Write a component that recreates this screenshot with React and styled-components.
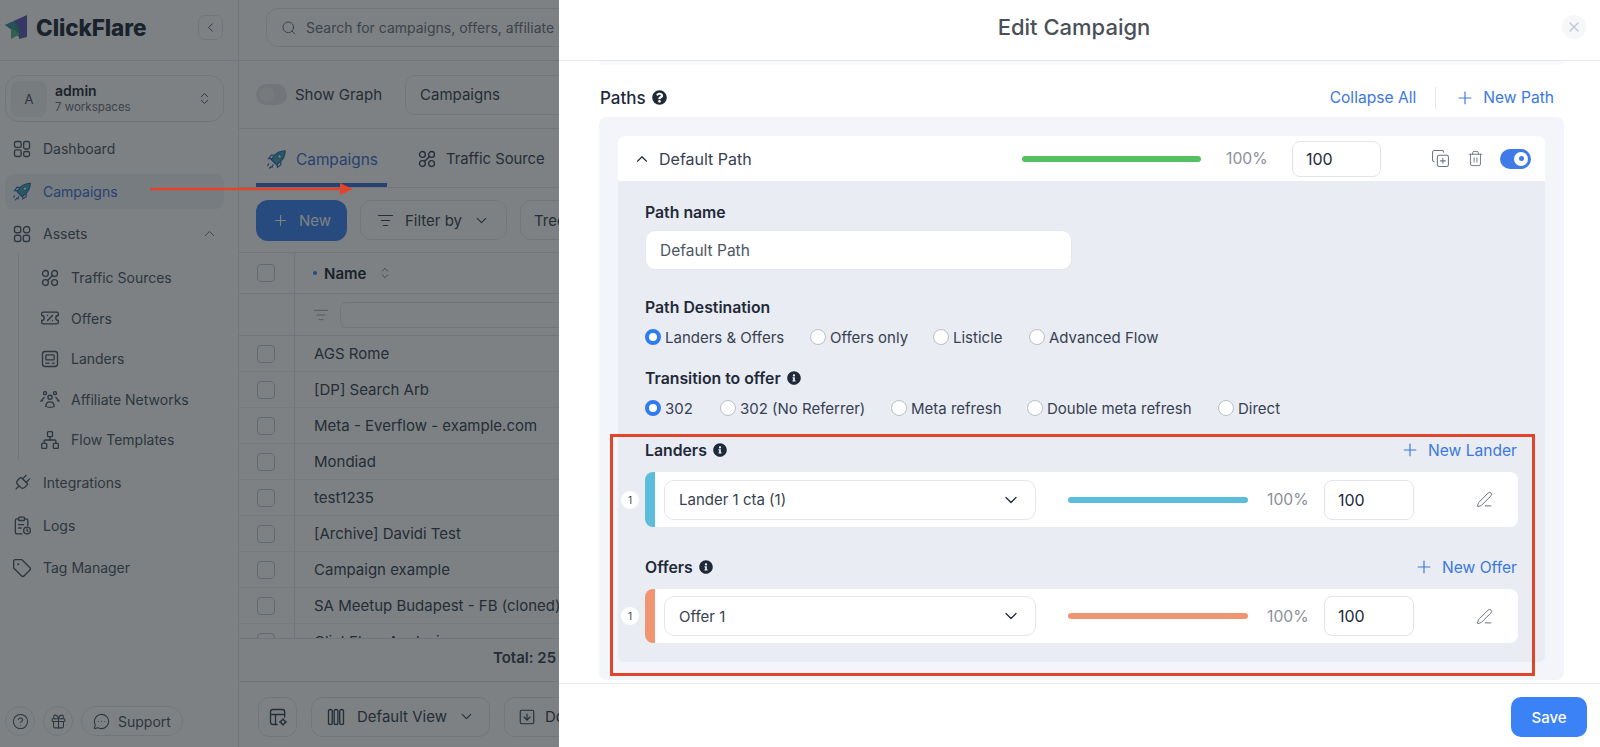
import React from 'react'
import styled, { createGlobalStyle } from 'styled-components'
import {
  ChevronDown, ChevronLeft, ChevronUp, ChevronsUpDown, CircleHelp, CopyPlus, Gift,
  ListFilter, MessageCircleMore, Network, PenLine, Plug, Plus, Search, SquareArrowDown,
  Tag, TicketPercent, Trash2, X
} from 'lucide-react'
import { FaInfoCircle, FaQuestionCircle } from 'react-icons/fa'

const GlobalStyle = createGlobalStyle`
  html, body { margin: 0; height: 100%; }
  body { font-family: Inter, "Liberation Sans", sans-serif; color: #1f2937; overflow: hidden; background: #fff; }
  * { box-sizing: border-box; }
`

const Shell = styled.div`
  position: relative;
  display: flex;
  width: 1600px;
  height: 747px;
  overflow: hidden;
`

/* sidebar */
const Sidebar = styled.aside`
  width: 239px;
  flex: none;
  display: flex;
  flex-direction: column;
  border-right: 1px solid #e5e7eb;
  padding-bottom: 11px;
`

const LogoBar = styled.div`
  height: 61px;
  flex: none;
  display: flex;
  align-items: center;
  padding: 0 15px 6px 5px;
  border-bottom: 1px solid #e5e7eb;
`

const LogoText = styled.span`
  margin-left: 8px;
  font-size: 22.5px;
  font-weight: 800;
  color: #1e293b;
  letter-spacing: -0.1px;
`

const CollapseButton = styled.span`
  margin-left: auto;
  width: 25px;
  height: 25px;
  border: 1px solid #e5e7eb;
  border-radius: 7px;
  display: flex;
  align-items: center;
  justify-content: center;
  color: #4b5563;
`

const Account = styled.div`
  margin: 14px 14px 0 5px;
  height: 47px;
  border: 1px solid #e5e7eb;
  border-radius: 14px;
  display: flex;
  align-items: center;
  padding: 0 11px 0 5px;
  color: #4b5563;
`

const Avatar = styled.span`
  width: 36px;
  height: 36px;
  border-radius: 8px;
  background: #f1f3f5;
  display: flex;
  align-items: center;
  justify-content: center;
  font-size: 13px;
  margin-right: 8px;
`

const AccountName = styled.div`
  font-size: 14px;
  font-weight: 600;
  color: #1f2937;
  line-height: 17px;
`

const AccountSub = styled.div`
  font-size: 11.5px;
  color: #6b7280;
  line-height: 17px;
`

const AccountText = styled.div`
  flex: 1;
`

const Nav = styled.nav`
  flex: 1;
  display: flex;
  flex-direction: column;
  padding: 9px 14px 0 5px;
`

const NavItem = styled.a`
  display: flex;
  align-items: center;
  height: ${p => p.$sub ? '40.5px' : '35px'};
  margin-bottom: ${p => p.$sub ? 0 : '7.5px'};
  padding-left: ${p => p.$sub ? '35px' : '7px'};
  gap: 11px;
  border-radius: 8px;
  font-size: 14px;
  color: ${p => p.$active ? '#3b6fd4' : '#4b5563'};
  background: ${p => p.$active ? '#f0f3f8' : 'transparent'};
`

const NavIcon = styled.span`
  width: 20px;
  flex: none;
  display: flex;
  align-items: center;
  justify-content: center;
`

const NavEnd = styled.span`
  margin-left: auto;
  margin-right: 6px;
  display: flex;
  color: #6b7280;
`

const SubNav = styled.div`
  margin: -1px 0 5px;
  display: flex;
  flex-direction: column;
  position: relative;
  &::before {
    content: '';
    position: absolute;
    left: 13px;
    top: -4px;
    bottom: 0;
    width: 1px;
    background: #e5e7eb;
  }
`

const SideFooter = styled.div`
  display: flex;
  gap: 8px;
  padding-left: 5px;
  margin-top: -1px;
`

const RoundButton = styled.span`
  height: 30px;
  min-width: 30px;
  border: 1px solid #e5e7eb;
  border-radius: 15px;
  display: flex;
  align-items: center;
  justify-content: center;
  gap: 8px;
  padding: ${p => p.$wide ? '0 11px' : 0};
  font-size: 14px;
  color: #4b5563;
`

/* page behind the drawer */
const Main = styled.main`
  flex: 1;
  min-width: 0;
  display: flex;
  flex-direction: column;
`

const TopBar = styled.div`
  height: 61px;
  flex: none;
  padding: 8px 18px 8px 27px;
  border-bottom: 1px solid #e5e7eb;
`

const SearchBox = styled.div`
  height: 39px;
  border: 1px solid #e5e7eb;
  border-radius: 12px;
  display: flex;
  align-items: center;
  gap: 9px;
  padding-left: 14px;
  font-size: 14px;
  color: #6b7280;
  white-space: nowrap;
`

const GraphBar = styled.div`
  height: 68px;
  flex: none;
  display: flex;
  align-items: center;
  padding: 0 17px;
  border-bottom: 1px solid #e5e7eb;
  font-size: 15px;
  color: #374151;
`

const FakeToggle = styled.span`
  width: 31px;
  height: 21px;
  border-radius: 11px;
  background: #e5e7eb;
  margin-right: 8px;
  display: flex;
  align-items: center;
  padding-left: 3px;
  &::after {
    content: '';
    width: 15px;
    height: 15px;
    border-radius: 50%;
    background: #eef0f2;
  }
`

const ViewSelect = styled.div`
  margin-left: 23px;
  width: 400px;
  height: 40px;
  border: 1px solid #e5e7eb;
  border-radius: 10px;
  display: flex;
  align-items: center;
  padding-left: 14px;
`

const Tabs = styled.div`
  height: 59px;
  flex: none;
  display: flex;
  align-items: center;
  padding: 0 18px 0 17px;
  border-bottom: 1px solid #e5e7eb;
`

const TabItem = styled.span`
  width: ${p => p.$width}px;
  height: 100%;
  display: flex;
  align-items: center;
  padding-left: 10px;
  padding-top: ${p => p.$active ? '6px' : '2px'};
  gap: 9px;
  font-size: ${p => p.$active ? '15.4px' : '14.8px'};
  color: ${p => p.$active ? '#3b6fd4' : '#374151'};
  border-bottom: ${p => p.$active ? '4px solid #3b6fd4' : '0'};
`

const Toolbar = styled.div`
  height: 65px;
  flex: none;
  display: flex;
  align-items: center;
  gap: 13px;
  padding: 0 17px;
  border-bottom: 1px solid #e5e7eb;
  white-space: nowrap;
`

const PrimaryButton = styled.span`
  width: 91px;
  height: 41px;
  border-radius: 12px;
  background: #3b82f6;
  color: #fff;
  display: flex;
  align-items: center;
  justify-content: center;
  gap: 10px;
  font-size: 15px;
  flex: none;
`

const GhostButton = styled.span`
  width: ${p => p.$width}px;
  height: 40px;
  flex: none;
  border: 1px solid #e5e7eb;
  border-radius: 11px;
  display: flex;
  align-items: center;
  justify-content: ${p => p.$left ? 'flex-start' : 'center'};
  gap: ${p => p.$left ? '9px' : '11px'};
  padding: ${p => p.$left ? '0 13px' : 0};
  font-size: 15px;
  color: #374151;
`

const TableHead = styled.div`
  height: 41px;
  flex: none;
  display: flex;
  align-items: center;
  border-bottom: 1px solid #e5e7eb;
  font-size: 15px;
  font-weight: 600;
`

const CheckCell = styled.span`
  width: 56px;
  flex: none;
  align-self: stretch;
  display: flex;
  align-items: center;
  padding-left: 18px;
  border-right: 1px solid #e5e7eb;
`

const Checkbox = styled.span`
  width: 18px;
  height: 18px;
  border: 1px solid #c4c9d1;
  border-radius: 4px;
  flex: none;
`

const Dot = styled.span`
  width: 4px;
  height: 4px;
  border-radius: 50%;
  background: #3b82f6;
  margin: 0 7px 0 18px;
`

const SortIcon = styled.span`
  display: flex;
  margin-left: 12px;
  color: #6b7280;
`

const FilterRow = styled.div`
  height: 42px;
  flex: none;
  display: flex;
  align-items: center;
  border-bottom: 1px solid #e5e7eb;
  color: #9ca3af;
`

const FilterInput = styled.span`
  margin-left: 11px;
  flex: 1;
  height: 26px;
  border: 1px solid #e5e7eb;
  border-radius: 6px;
`

const FilterIcon = styled.span`
  margin-left: 18px;
  display: flex;
`

const TableRows = styled.div`
  height: 302px;
  flex: none;
  overflow: hidden;
`

const TableRow = styled.div`
  height: 36px;
  display: flex;
  align-items: center;
  border-bottom: 1px solid #eceef1;
  font-size: 15px;
  color: #374151;
  white-space: nowrap;
`

const RowName = styled.span`
  margin-left: 19px;
`

const TotalRow = styled.div`
  height: 44px;
  flex: none;
  padding: 9px 0 0 254px;
  border-top: 1px solid #e5e7eb;
  border-bottom: 1px solid #e5e7eb;
  font-size: 15px;
  font-weight: 600;
  color: #374151;
  white-space: nowrap;
`

const PageFooter = styled.div`
  flex: 1;
  display: flex;
  align-items: center;
  gap: 14px;
  padding: 4px 19px 0;
`

/* dimmer, drawer and annotations */
const Dimmer = styled.div`
  position: absolute;
  inset: 0;
  background: rgba(24, 30, 33, 0.56);
`

const Drawer = styled.section`
  position: absolute;
  top: 0;
  right: 0;
  bottom: 0;
  width: 1041px;
  background: #fff;
  display: flex;
  flex-direction: column;
`

const DrawerHeader = styled.header`
  position: relative;
  height: 61px;
  flex: none;
  display: flex;
  align-items: center;
  justify-content: center;
  padding: 0 11px 7px 0;
  border-bottom: 1px solid #e5e7eb;
`

const DrawerTitle = styled.h2`
  margin: 0;
  font-size: 22px;
  font-weight: 500;
  color: #4a5058;
`

const CloseButton = styled.span`
  position: absolute;
  right: 14px;
  top: 15px;
  width: 24px;
  height: 24px;
  border-radius: 50%;
  background: #f6f7f9;
  color: #c4c8d6;
  display: flex;
  align-items: center;
  justify-content: center;
`

const DrawerBody = styled.div`
  flex: 1;
  min-height: 0;
  padding: 0 36px 0 40px;
`

const PrevCardEnd = styled.div`
  height: 4px;
  border-radius: 0 0 6px 6px;
  background: #f8f9fc;
`

const PathsHead = styled.div`
  height: 52px;
  display: flex;
  align-items: center;
  padding: 13px 10px 0 1px;
`

const PathsTitle = styled.span`
  font-size: 17px;
  font-weight: 500;
  color: #1f2937;
  display: flex;
  align-items: center;
  gap: 6px;
`

const LinkButton = styled.span`
  display: flex;
  align-items: center;
  gap: 8px;
  font-size: 15.6px;
  color: #3b78e0;
  margin-left: ${p => p.$auto ? 'auto' : 0};
`

const VLine = styled.span`
  width: 1px;
  height: 22px;
  background: #e5e7eb;
  margin: 0 19px;
`

const PathsPanel = styled.div`
  background: #f3f5fb;
  border-radius: 8px;
  padding: 19px 19px 18px 19px;
`

const PathCard = styled.div`
  border-radius: 6px;
  overflow: hidden;
  background: #e9ecf3;
`

const CardHead = styled.div`
  height: 45px;
  background: #fff;
  display: flex;
  align-items: center;
  padding: 0 14px 0 15px;
  font-size: 16px;
  color: #374151;
`

const CardName = styled.span`
  margin: 0 auto 0 8px;
`

const Bar = styled.span`
  width: ${p => p.$width}px;
  height: 6px;
  flex: none;
  border-radius: 3px;
  background: ${p => p.$color};
  margin-right: ${p => p.$gap}px;
`

const Percent = styled.span`
  font-size: 15.7px;
  color: #8a8f98;
  flex: none;
  width: ${p => p.$width}px;
`

const NumberBox = styled.span`
  width: ${p => p.$width}px;
  height: ${p => p.$height}px;
  flex: none;
  border: 1px solid #e1e4ea;
  border-radius: 8px;
  background: #fff;
  display: flex;
  align-items: center;
  padding-left: 13px;
  font-size: 16px;
  color: #1f2937;
`

const IconSlot = styled.span`
  display: flex;
  color: #6b7280;
  margin-left: ${p => p.$left}px;
`

const Toggle = styled.span`
  width: 31px;
  height: 20px;
  flex: none;
  border-radius: 10px;
  background: #3f7ae8;
  margin-left: 16px;
  display: flex;
  align-items: center;
  justify-content: flex-end;
  padding-right: 3px;
`

const ToggleKnob = styled.span`
  width: 14px;
  height: 14px;
  flex: none;
  border-radius: 50%;
  background: #fff;
  display: flex;
  align-items: center;
  justify-content: center;
  &::after {
    content: '';
    width: 5px;
    height: 5px;
    border-radius: 50%;
    background: #3f7ae8;
  }
`

const CardBody = styled.div`
  position: relative;
  padding: 22px 27px 19px 27px;
`

const FieldLabel = styled.div`
  display: flex;
  align-items: center;
  gap: 6px;
  height: 18px;
  font-size: 15.8px;
  font-weight: 600;
  color: #1f2937;
  margin-top: ${p => p.$top || 0}px;
`

const NameInput = styled.div`
  width: 427px;
  height: 40px;
  margin-top: 9px;
  border: 1px solid #e3e6ec;
  border-radius: 10px;
  background: #fff;
  display: flex;
  align-items: center;
  padding-left: 14px;
  font-size: 15.5px;
  color: #4b5563;
`

const RadioRow = styled.div`
  height: 20px;
  margin-top: 11px;
  display: flex;
  align-items: center;
`

const RadioItem = styled.span`
  display: flex;
  align-items: center;
  gap: 4px;
  font-size: 15px;
  color: #374151;
  white-space: nowrap;
  width: ${p => p.$width}px;
  flex: none;
`

const RadioDot = styled.span`
  width: 16px;
  height: 16px;
  flex: none;
  border-radius: 50%;
  background: #fff;
  border: ${p => p.$on ? '4.5px solid #2f7bf0' : '1px solid #b9bec8'};
`

const SectionHead = styled.div`
  display: flex;
  justify-content: space-between;
  align-items: center;
  height: 18px;
  margin-top: ${p => p.$top}px;
  padding-right: 1px;
`

const ItemRow = styled.div`
  position: relative;
  height: ${p => p.$height}px;
  margin-top: ${p => p.$top}px;
  background: #fff;
  border-radius: 8px;
  display: flex;
  align-items: center;
`

const Strip = styled.span`
  width: 10px;
  align-self: stretch;
  flex: none;
  border-radius: 8px 0 0 8px;
  background: ${p => p.$color};
`

const OrderBadge = styled.span`
  position: absolute;
  left: -24px;
  top: 50%;
  margin-top: -9px;
  width: 18px;
  height: 18px;
  border-radius: 50%;
  background: #fff;
  display: flex;
  align-items: center;
  justify-content: center;
  font-size: 10px;
  color: #374151;
`

const ItemSelect = styled.span`
  width: 372px;
  height: 40px;
  flex: none;
  margin: 0 32px 0 9px;
  border: 1px solid #e3e6ec;
  border-radius: 10px;
  display: flex;
  align-items: center;
  justify-content: space-between;
  padding: 0 14px 0 14px;
  font-size: 15px;
  color: #374151;
`

const DrawerFooter = styled.footer`
  height: 64px;
  flex: none;
  display: flex;
  justify-content: flex-end;
  align-items: flex-start;
  padding: 13px 13px 0 0;
  border-top: 1px solid #e5e7eb;
`

const SaveButton = styled.span`
  width: 76px;
  height: 40px;
  border-radius: 10px;
  background: #3b82f6;
  color: #fff;
  display: flex;
  align-items: center;
  justify-content: center;
  font-size: 15px;
  font-weight: 500;
`

const RedBox = styled.div`
  position: absolute;
  left: 610px;
  top: 434px;
  width: 925px;
  height: 242px;
  border: 3px solid #e2442b;
  pointer-events: none;
`

const RedArrow = styled.svg`
  position: absolute;
  left: 150px;
  top: 182px;
`

/* drawn icons */
const Svg = ({ size = 20, children, ...rest }) => (
  <svg width={size} height={size} viewBox="0 0 24 24" fill="none" stroke="currentColor" strokeWidth="1.6" strokeLinecap="round" strokeLinejoin="round" {...rest}>{children}</svg>
)

const LogoMark = () => (
  <svg width="23" height="25" viewBox="0 0 23 25">
    <polygon points="0,10 21,1 14,22 8,16" fill="#3d8d8a" />
    <polygon points="9,6 22,0 22,22 14,24 14,12" fill="#5b57b8" />
    <polygon points="6,13 15,19 6,24" fill="#55b58a" />
    <polygon points="0,10 9,6 9,13" fill="#3c8fb0" />
  </svg>
)

const RocketIcon = ({ size = 21 }) => (
  <svg width={size} height={size} viewBox="0 0 24 24" fill="none">
    <path d="M22 2c-6 .3-10 2.3-13 6l-3 4 6 6 4-3c3.700-3 5.700-7 6-13z" fill="#3fa7b5" stroke="#2f63b8" strokeWidth="1.300" strokeLinejoin="round" />
    <circle cx="15.500" cy="8.500" r="2" fill="#fff" stroke="#2f63b8" />
    <path d="M7 11H3l3-4h3M13 17v4l4-3v-3M3 17l-1 2M6 20l-2 2M8 18l-1 3" stroke="#2f63b8" strokeWidth="1.300" strokeLinecap="round" />
  </svg>
)

const DashIcon = () => (
  <Svg size={20}>
    <rect x="3" y="3" width="8" height="7" rx="2" /><rect x="14" y="3" width="7" height="9" rx="2" />
    <rect x="3" y="13" width="8" height="8" rx="2" /><rect x="14" y="15" width="7" height="6" rx="2" />
  </Svg>
)

const AssetsIcon = () => (
  <Svg size={20}>
    <rect x="3" y="3" width="7.500" height="7.500" rx="2.500" /><circle cx="17.500" cy="6.800" r="3.800" />
    <rect x="3" y="13.500" width="7.500" height="7.500" rx="2.500" /><rect x="13.500" y="13.500" width="7.500" height="7.500" rx="2.500" />
  </Svg>
)

const TrafficIcon = ({ size = 20 }) => (
  <Svg size={size}>
    <circle cx="6.500" cy="6.500" r="3.500" /><circle cx="17.500" cy="6.500" r="3.500" />
    <circle cx="6.500" cy="17.500" r="3.500" /><circle cx="17.500" cy="17.500" r="3.500" />
    <path d="M15 9l-6 6" />
  </Svg>
)

const LanderIcon = () => (
  <Svg size={20}>
    <rect x="3" y="3" width="18" height="18" rx="3" /><rect x="7" y="7" width="10" height="6" rx="1" />
    <path d="M7 17h4M15 17h2" />
  </Svg>
)

const PeopleIcon = () => (
  <Svg size={22}>
    <circle cx="12" cy="10" r="2.500" /><circle cx="6" cy="5" r="1.800" /><circle cx="18" cy="5" r="1.800" />
    <path d="M7 21c0-3.500 2-5.500 5-5.500s5 2 5 5.500c-2.500 1.200-7.500 1.200-10 0zM3 14l-2 .5L5 10M21 14l2 .5L19 10" />
  </Svg>
)

const LogsIcon = () => (
  <Svg size={21}>
    <rect x="8" y="2" width="7" height="4" rx="1" />
    <path d="M8 4H6a2 2 0 0 0-2 2v14a2 2 0 0 0 2 2h6M15 4h2a2 2 0 0 1 2 2v6M8 11h6M8 15h3" />
    <circle cx="18" cy="18" r="4" /><path d="M18 16v2l1 1" />
  </Svg>
)

const ColumnsIcon = () => (
  <Svg size={20}>
    <rect x="3" y="3" width="4.500" height="18" rx="2.200" /><rect x="9.800" y="3" width="4.500" height="18" rx="2.200" /><rect x="16.500" y="3" width="4.500" height="18" rx="2.200" />
  </Svg>
)

const TableGearIcon = () => (
  <Svg size={20}>
    <path d="M11 21H6a3 3 0 0 1-3-3V6a3 3 0 0 1 3-3h11a3 3 0 0 1 3 3v6M3 9h17M9 9v12" />
    <circle cx="18" cy="18" r="2.500" /><path d="M18 14v1M18 21v1M14 18h1M21 18h1" />
  </Svg>
)

const navAssets = [
  ['Traffic Sources', <TrafficIcon key="t" />],
  ['Offers', <TicketPercent key="o" size={20} strokeWidth={1.6} />],
  ['Landers', <LanderIcon key="l" />],
  ['Affiliate Networks', <PeopleIcon key="a" />],
  ['Flow Templates', <Network key="f" size={20} strokeWidth={1.6} />]
]

const campaigns = [
  'AGS Rome', '[DP] Search Arb', 'Meta - Everflow - example.com', 'Mondiad', 'test1235',
  '[Archive] Davidi Test', 'Campaign example', 'SA Meetup Budapest - FB (cloned)', 'ClickFlare Analysis'
]

const destinations = [['Landers & Offers', 165, true], ['Offers only', 123], ['Listicle', 96], ['Advanced Flow', 120]]
const transitions = [['302', 75, true], ['302 (No Referrer)', 171], ['Meta refresh', 136], ['Double meta refresh', 191], ['Direct', 70]]

const InfoLabel = ({ children, top }) => (
  <FieldLabel $top={top}>{children} <FaInfoCircle size={14} color="#1f2937" /></FieldLabel>
)

const Radios = ({ items }) => (
  <RadioRow>
    {items.map(([label, width, on]) => (
      <RadioItem key={label} $width={width}><RadioDot $on={on} />{label}</RadioItem>
    ))}
  </RadioRow>
)

const AddLink = ({ children }) => (
  <LinkButton><Plus size={20} strokeWidth={1.4} />{children}</LinkButton>
)

const ResourceRow = ({ color, name, height, top }) => (
  <ItemRow $height={height} $top={top}>
    <OrderBadge>1</OrderBadge>
    <Strip $color={color} />
    <ItemSelect>{name}<ChevronDown size={20} strokeWidth={1.5} color="#1f2937" /></ItemSelect>
    <Bar $width={180} $gap={19} $color={color} />
    <Percent $width={57}>100%</Percent>
    <NumberBox $width={90} $height={40}>100</NumberBox>
    <IconSlot $left={62}><PenLine size={17} strokeWidth={1.4} /></IconSlot>
  </ItemRow>
)

const App = () => (
  <Shell>
    <GlobalStyle />
    <Sidebar>
      <LogoBar>
        <LogoMark />
        <LogoText>ClickFlare</LogoText>
        <CollapseButton><ChevronLeft size={15} strokeWidth={1.5} /></CollapseButton>
      </LogoBar>
      <Account>
        <Avatar>A</Avatar>
        <AccountText>
          <AccountName>admin</AccountName>
          <AccountSub>7 workspaces</AccountSub>
        </AccountText>
        <ChevronsUpDown size={15} strokeWidth={1.5} />
      </Account>
      <Nav>
        <NavItem><NavIcon><DashIcon /></NavIcon>Dashboard</NavItem>
        <NavItem $active><NavIcon><RocketIcon /></NavIcon>Campaigns</NavItem>
        <NavItem><NavIcon><AssetsIcon /></NavIcon>Assets<NavEnd><ChevronUp size={17} strokeWidth={1.4} /></NavEnd></NavItem>
        <SubNav>
          {navAssets.map(([label, icon]) => (
            <NavItem $sub key={label}><NavIcon>{icon}</NavIcon>{label}</NavItem>
          ))}
        </SubNav>
        <NavItem><NavIcon><Plug size={20} strokeWidth={1.6} style={{ transform: 'rotate(45deg)' }} /></NavIcon>Integrations</NavItem>
        <NavItem><NavIcon><LogsIcon /></NavIcon>Logs</NavItem>
        <NavItem><NavIcon><Tag size={20} strokeWidth={1.6} /></NavIcon>Tag Manager</NavItem>
      </Nav>
      <SideFooter>
        <RoundButton><CircleHelp size={17} strokeWidth={1.5} /></RoundButton>
        <RoundButton><Gift size={17} strokeWidth={1.5} /></RoundButton>
        <RoundButton $wide><MessageCircleMore size={17} strokeWidth={1.5} />Support</RoundButton>
      </SideFooter>
    </Sidebar>

    <Main>
      <TopBar>
        <SearchBox><Search size={16} strokeWidth={1.5} />Search for campaigns, offers, affiliate networks...</SearchBox>
      </TopBar>
      <GraphBar>
        <FakeToggle />Show Graph
        <ViewSelect>Campaigns</ViewSelect>
      </GraphBar>
      <Tabs>
        <TabItem $active $width={131}><RocketIcon />Campaigns</TabItem>
        <TabItem $width={160} style={{ marginLeft: 20 }}><TrafficIcon />Traffic Source</TabItem>
      </Tabs>
      <Toolbar>
        <PrimaryButton><Plus size={17} strokeWidth={1.6} />New</PrimaryButton>
        <GhostButton $width={147}><ListFilter size={17} strokeWidth={1.5} />Filter by<ChevronDown size={17} strokeWidth={1.5} /></GhostButton>
        <GhostButton $width={200} $left>Tree</GhostButton>
      </Toolbar>
      <TableHead>
        <CheckCell><Checkbox /></CheckCell>
        <Dot />Name
        <SortIcon><ChevronsUpDown size={14} strokeWidth={1.5} /></SortIcon>
      </TableHead>
      <FilterRow>
        <CheckCell />
        <FilterIcon><ListFilter size={16} strokeWidth={1.5} /></FilterIcon>
        <FilterInput />
      </FilterRow>
      <TableRows>
        {campaigns.map(name => (
          <TableRow key={name}>
            <CheckCell><Checkbox /></CheckCell>
            <RowName>{name}</RowName>
          </TableRow>
        ))}
      </TableRows>
      <TotalRow>Total: 25 campaigns</TotalRow>
      <PageFooter>
        <GhostButton $width={39}><TableGearIcon /></GhostButton>
        <GhostButton $width={179}><ColumnsIcon />Default View<ChevronDown size={17} strokeWidth={1.5} /></GhostButton>
        <GhostButton $width={200} $left><SquareArrowDown size={18} strokeWidth={1.5} />Download</GhostButton>
      </PageFooter>
    </Main>

    <Dimmer />
    <RedArrow width="204" height="14" viewBox="0 0 204 14">
      <path d="M0 7h192" stroke="#e2442b" strokeWidth="2.500" />
      <polygon points="190,1 203,7 190,13" fill="#e2442b" />
    </RedArrow>

    <Drawer>
      <DrawerHeader>
        <DrawerTitle>Edit Campaign</DrawerTitle>
        <CloseButton><X size={16} strokeWidth={2} /></CloseButton>
      </DrawerHeader>
      <DrawerBody>
        <PrevCardEnd />
        <PathsHead>
          <PathsTitle>Paths <FaQuestionCircle size={15} color="#1f2937" /></PathsTitle>
          <LinkButton $auto>Collapse All</LinkButton>
          <VLine />
          <AddLink>New Path</AddLink>
        </PathsHead>
        <PathsPanel>
          <PathCard>
            <CardHead>
              <ChevronUp size={18} strokeWidth={1.5} color="#1f2937" />
              <CardName>Default Path</CardName>
              <Bar $width={179} $gap={25} $color="#55c061" />
              <Percent $width={66}>100%</Percent>
              <NumberBox $width={89} $height={36}>100</NumberBox>
              <IconSlot $left={50}><CopyPlus size={19} strokeWidth={1.3} /></IconSlot>
              <IconSlot $left={17}><Trash2 size={17} strokeWidth={1.3} /></IconSlot>
              <Toggle><ToggleKnob /></Toggle>
            </CardHead>
            <CardBody>
              <FieldLabel>Path name</FieldLabel>
              <NameInput>Default Path</NameInput>
              <FieldLabel $top={28}>Path Destination</FieldLabel>
              <Radios items={destinations} />
              <InfoLabel top={22}>Transition to offer</InfoLabel>
              <Radios items={transitions} />
              <SectionHead $top={23}>
                <InfoLabel>Landers</InfoLabel>
                <AddLink>New Lander</AddLink>
              </SectionHead>
              <ResourceRow color="#5bbcdc" name="Lander 1 cta (1)" height={55} top={13} />
              <SectionHead $top={31}>
                <InfoLabel>Offers</InfoLabel>
                <AddLink>New Offer</AddLink>
              </SectionHead>
              <ResourceRow color="#f19472" name="Offer 1" height={54} top={13} />
            </CardBody>
          </PathCard>
        </PathsPanel>
      </DrawerBody>
      <DrawerFooter>
        <SaveButton>Save</SaveButton>
      </DrawerFooter>
    </Drawer>
    <RedBox />
  </Shell>
)

export default App
